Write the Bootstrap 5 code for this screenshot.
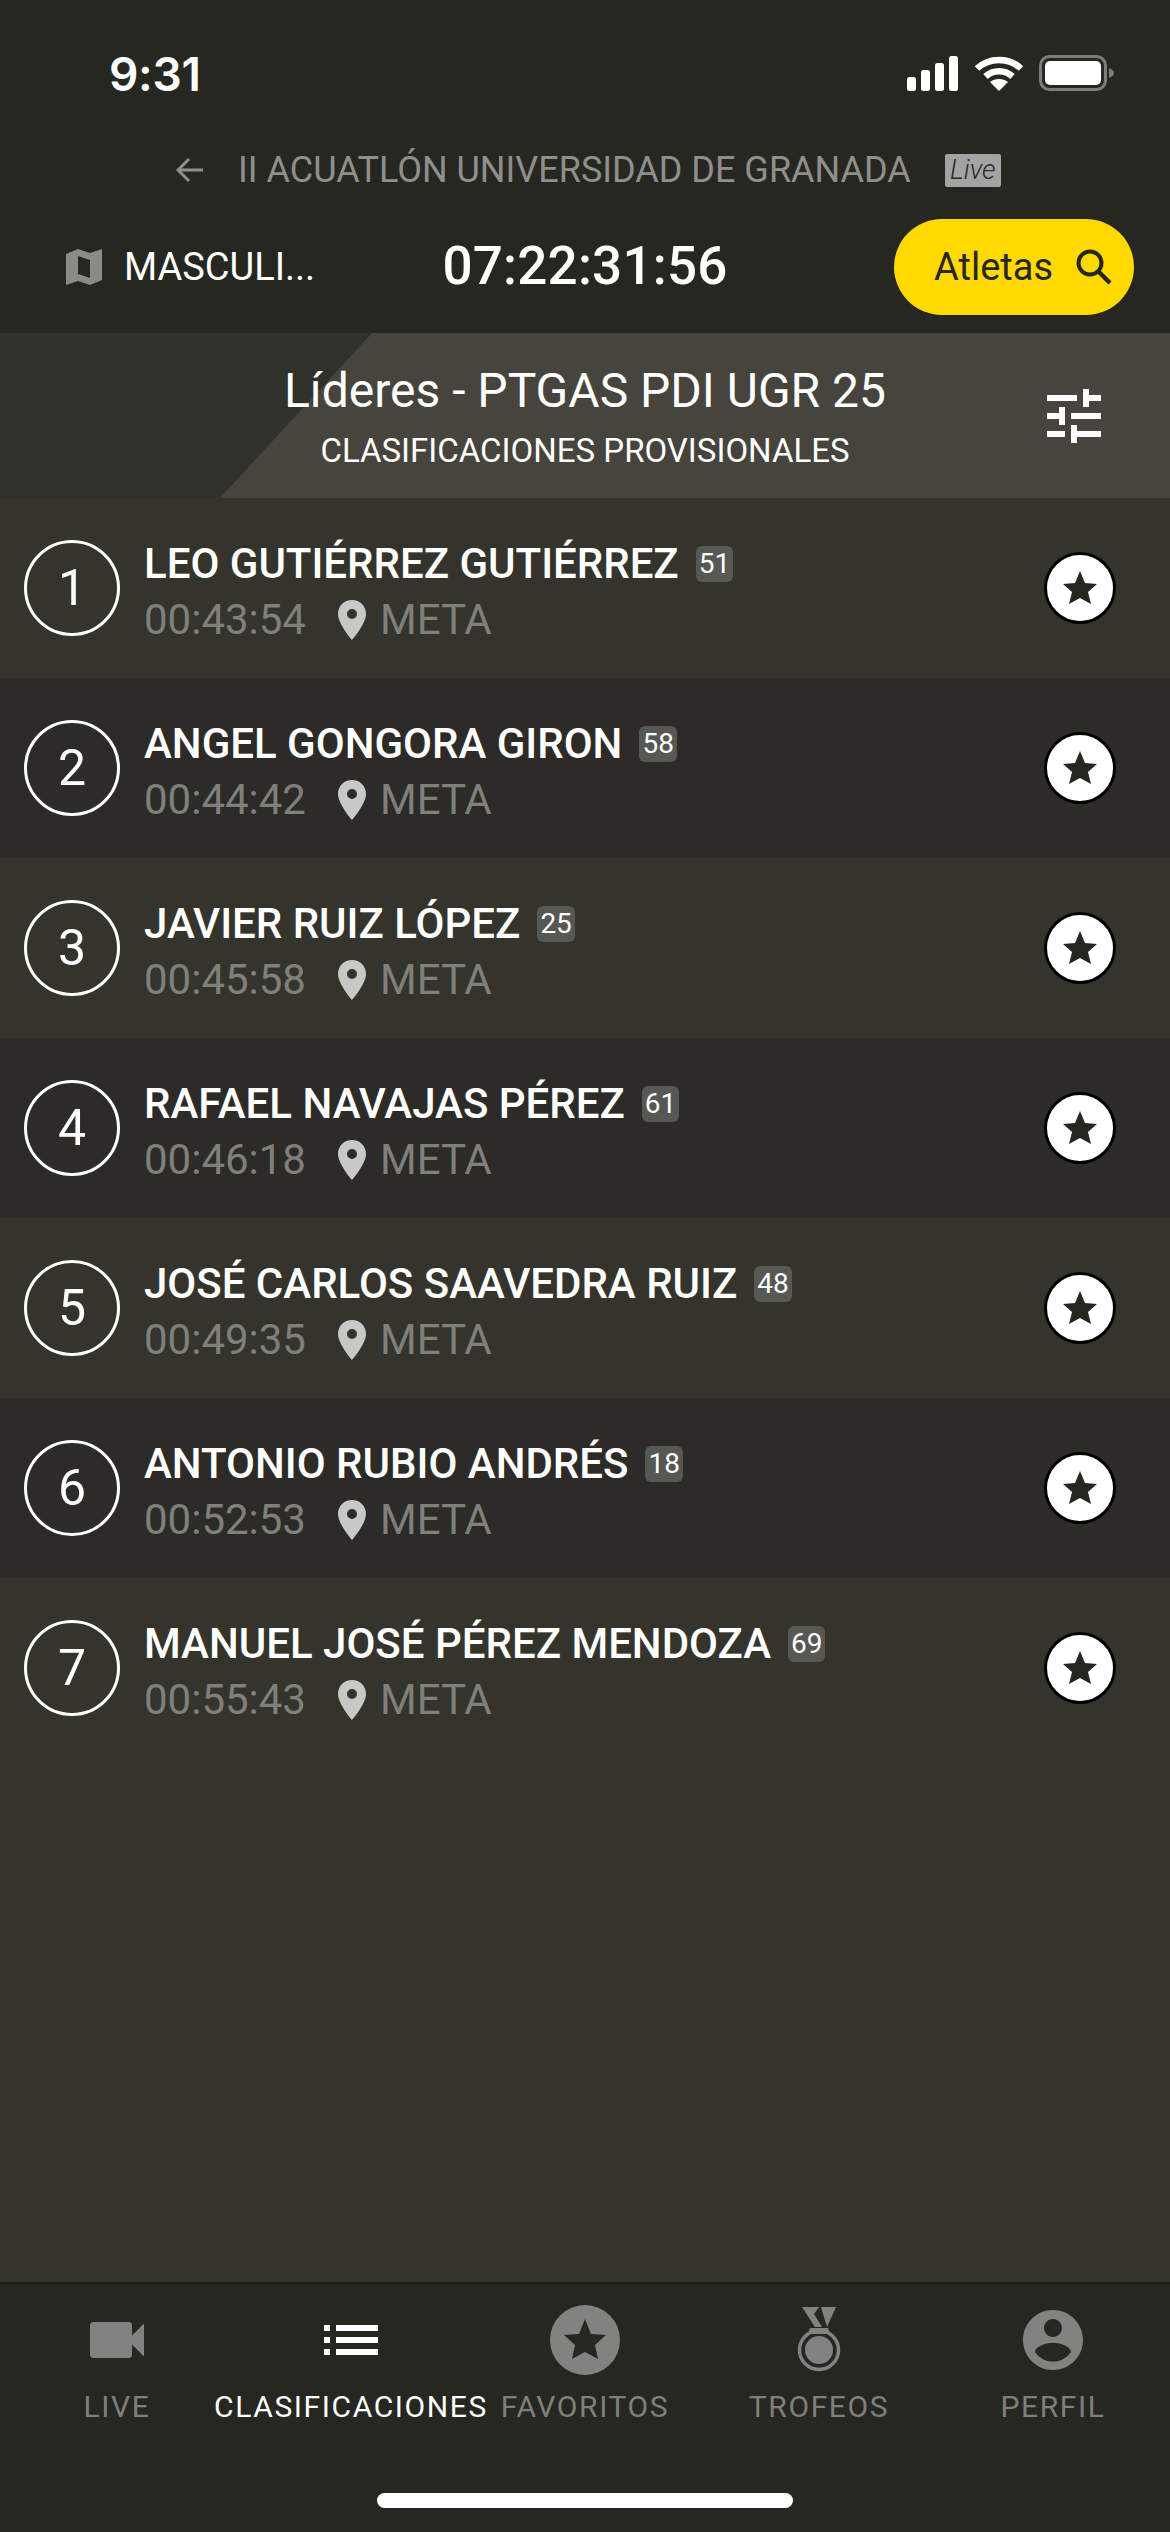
<!DOCTYPE html>
<html lang="es">
<head>
<meta charset="utf-8">
<title>Clasificaciones</title>
<link rel="stylesheet" href="https://cdn.jsdelivr.net/npm/bootstrap@5.3.0/dist/css/bootstrap.min.css">
<style>
html,body{margin:0;height:2532px;background:#34342d;font-family:Roboto,"Liberation Sans",sans-serif;}
.app-shell{width:1170px;height:2532px;overflow:hidden;}
.top-head{background:#272722;height:333px;flex:none;}
.status-bar{height:132px;padding:52px 55px 0 109px;align-items:flex-start;}
.clock{font-family:Inter,Roboto,sans-serif;font-weight:600;font-size:46px;line-height:44px;color:#fff;letter-spacing:-.3px;}
.status-icons{gap:15px;margin-top:3px;}
.event-row{height:76px;padding-left:176px;}
.event-title{font-size:36px;color:#8f8f8b;margin-left:35px;line-height:76px;white-space:nowrap;}
.live-tag{width:56px;height:33px;background:#a3a3a3;color:#2a2a26;font-style:italic;font-weight:300;font-size:27px;line-height:33px;text-align:center;border-radius:2px;margin-left:34px;}
.race-row{height:96px;margin-top:11px;padding-left:66px;padding-right:36px;}
.cat-name{font-size:38px;color:#fff;margin-left:22px;width:200px;}
.race-clock{font-size:53px;font-weight:500;color:#fff;width:300px;text-align:center;margin-left:111px;letter-spacing:.2px;}
.btn.athletes-btn{height:96px;width:240px;border-radius:48px;background:#ffd900;border:0;color:#272722;font-size:38px;padding:0 0 0 18px;gap:23px;margin-left:auto;}
.stage-band{height:165px;flex:none;background:#31312c;position:relative;color:#fff;}
.stage-band::before{content:"";position:absolute;inset:0;background:#46443d;clip-path:polygon(372px 0,100% 0,100% 100%,220px 100%);}
.stage-text{position:relative;text-align:center;width:100%;}
.stage-title{font-size:48px;line-height:54px;margin:0;padding-top:31px;font-weight:400;}
.stage-sub{font-size:33px;line-height:40px;margin-top:13px;font-weight:400;}
.tune-icon{position:absolute;left:1038px;top:47px;}
.rank-list{flex:1 1 auto;background:#34342d;}
.rank-list .list-group-item{height:180px;flex:none;background:#34342d;border:0;padding:0 0 0 24px;color:#fff;}
.rank-list .list-group-item:nth-child(even){background:#2c2b27;}
.pos-ring{width:96px;height:96px;border:3px solid #fff;border-radius:50%;font-size:50px;font-weight:400;flex:none;}
.rank-body{margin-left:24px;flex:1 1 auto;margin-top:8px;}
.athlete-name{font-size:42px;font-weight:500;line-height:48px;color:#fff;white-space:nowrap;}
.bib-tag{display:inline-block;background:#575753;color:#fff;border-radius:6px;font-size:28px;line-height:36px;font-weight:400;padding:0 3px;margin-left:17px;vertical-align:5px;}
.split-line{font-size:42px;line-height:48px;color:#7f7f7b;margin-top:8px;}
.pin-svg{margin:0 14px 0 32px;}
.fav-btn{width:72px;height:72px;border:3px solid #000;background:#fff;border-radius:50%;margin-right:54px;flex:none;}
.tab-bar{height:250px;flex:none;background:#272722;border-top:2px solid #1d1d19;flex-wrap:nowrap;}
.tab-bar .nav-link{flex:1 1 0;min-width:0;padding:20px 0 0;color:#7f7f7b;font-size:30px;line-height:34px;letter-spacing:1.6px;white-space:nowrap;}
.tab-bar .nav-link.active-tab{color:#fff;}
.tab-bar svg{display:block;margin-bottom:14px;flex:none;}
.home-pill{width:416px;height:15px;background:#fff;border-radius:8px;position:absolute;left:377px;top:2493px;}
</style>
</head>
<body>
<div class="app-shell d-flex flex-column">
  <header class="top-head">
    <div class="status-bar d-flex justify-content-between">
      <span class="clock">9:31</span>
      <span class="status-icons d-flex">
        <svg width="52" height="36" viewBox="0 0 52 36"><g fill="#fff"><rect x="0" y="22" width="9" height="14" rx="2.5"/><rect x="14" y="15" width="9" height="21" rx="2.5"/><rect x="28" y="8" width="9" height="28" rx="2.5"/><rect x="42" y="1" width="9" height="35" rx="2.5"/></g></svg>
        <svg width="50" height="36" viewBox="0 0 50 36"><g fill="none" stroke="#fff" stroke-width="6.5"><path d="M3 13.5C15 2 35 2 47 13.5"/><path d="M11.500 21.500C19 14.500 31 14.500 38.500 21.500"/></g><path d="M25 36L16 27C21 23 29 23 34 27Z" fill="#fff"/></svg>
        <svg width="76" height="36" viewBox="0 0 76 36"><rect x="1.500" y="1.500" width="65" height="33" rx="9" fill="none" stroke="#7c7c79" stroke-width="3"/><rect x="6" y="6" width="56" height="24" rx="5" fill="#fff"/><path d="M70 13C73 14 75 16 75 18S73 22 70 23Z" fill="#7c7c79"/></svg>
      </span>
    </div>
    <div class="event-row d-flex align-items-center">
      <svg width="27" height="26" viewBox="0 0 27 26"><path d="M13 2L2 13L13 24M2 13H27" fill="none" stroke="#8f8f8b" stroke-width="3"/></svg>
      <span class="event-title">II ACUATLÓN UNIVERSIDAD DE GRANADA</span>
      <span class="live-tag">Live</span>
    </div>
    <div class="race-row d-flex align-items-center">
      <svg width="36" height="36" viewBox="0 0 36 36"><path fill="#8b8b87" fill-rule="evenodd" d="M0 5L12 0L24 4L36 0V31L24 36L12 32L0 36ZM12 7V25L24 29V11Z"/></svg>
      <span class="cat-name text-truncate">MASCULI...</span>
      <span class="race-clock">07:22:31:56</span>
      <button type="button" class="btn athletes-btn d-flex align-items-center justify-content-center">Atletas
        <svg width="36" height="36" viewBox="0 0 36 36"><circle cx="14" cy="14" r="11.500" fill="none" stroke="#272722" stroke-width="4"/><path d="M22 22L34 34" stroke="#272722" stroke-width="4.500"/></svg>
      </button>
    </div>
  </header>

  <section class="stage-band">
    <div class="stage-text">
      <h1 class="stage-title">Líderes - PTGAS PDI UGR 25</h1>
      <div class="stage-sub">CLASIFICACIONES PROVISIONALES</div>
    </div>
    <svg class="tune-icon" width="72" height="72" viewBox="0 0 24 24"><path fill="#fff" d="M3 17v2h6v-2H3zM3 5v2h10V5H3zm10 16v-2h8v-2h-8v-2h-2v6h2zM7 9v2H3v2h4v2h2V9H7zm14 4v-2H11v2h10zm-6-4h2V7h4V5h-4V3h-2v6z"/></svg>
  </section>

  <main class="rank-list list-group list-group-flush rounded-0">
    <div class="list-group-item d-flex align-items-center"><span class="pos-ring d-flex align-items-center justify-content-center">1</span><div class="rank-body"><div class="athlete-name">LEO GUTIÉRREZ GUTIÉRREZ<span class="bib-tag">51</span></div><div class="split-line d-flex align-items-center">00:43:54<svg class="pin-svg" width="28" height="40" viewBox="0 0 28 40"><path fill="#c8c8c8" fill-rule="evenodd" d="M14 0C6 0 0 6 0 14C0 24 14 40 14 40S28 24 28 14C28 6 22 0 14 0ZM14 9A5 5 0 1 1 14 19A5 5 0 1 1 14 9Z"/></svg>META</div></div><span class="fav-btn d-flex align-items-center justify-content-center"><svg width="34" height="34" viewBox="0 0 34 34"><path fill="#272722" d="M17 0L22 12L34 13L25 21L28 33L17 27L6 33L9 21L0 13L12 12Z"/></svg></span></div>
    <div class="list-group-item d-flex align-items-center"><span class="pos-ring d-flex align-items-center justify-content-center">2</span><div class="rank-body"><div class="athlete-name">ANGEL GONGORA GIRON<span class="bib-tag">58</span></div><div class="split-line d-flex align-items-center">00:44:42<svg class="pin-svg" width="28" height="40" viewBox="0 0 28 40"><path fill="#c8c8c8" fill-rule="evenodd" d="M14 0C6 0 0 6 0 14C0 24 14 40 14 40S28 24 28 14C28 6 22 0 14 0ZM14 9A5 5 0 1 1 14 19A5 5 0 1 1 14 9Z"/></svg>META</div></div><span class="fav-btn d-flex align-items-center justify-content-center"><svg width="34" height="34" viewBox="0 0 34 34"><path fill="#272722" d="M17 0L22 12L34 13L25 21L28 33L17 27L6 33L9 21L0 13L12 12Z"/></svg></span></div>
    <div class="list-group-item d-flex align-items-center"><span class="pos-ring d-flex align-items-center justify-content-center">3</span><div class="rank-body"><div class="athlete-name">JAVIER RUIZ LÓPEZ<span class="bib-tag">25</span></div><div class="split-line d-flex align-items-center">00:45:58<svg class="pin-svg" width="28" height="40" viewBox="0 0 28 40"><path fill="#c8c8c8" fill-rule="evenodd" d="M14 0C6 0 0 6 0 14C0 24 14 40 14 40S28 24 28 14C28 6 22 0 14 0ZM14 9A5 5 0 1 1 14 19A5 5 0 1 1 14 9Z"/></svg>META</div></div><span class="fav-btn d-flex align-items-center justify-content-center"><svg width="34" height="34" viewBox="0 0 34 34"><path fill="#272722" d="M17 0L22 12L34 13L25 21L28 33L17 27L6 33L9 21L0 13L12 12Z"/></svg></span></div>
    <div class="list-group-item d-flex align-items-center"><span class="pos-ring d-flex align-items-center justify-content-center">4</span><div class="rank-body"><div class="athlete-name">RAFAEL NAVAJAS PÉREZ<span class="bib-tag">61</span></div><div class="split-line d-flex align-items-center">00:46:18<svg class="pin-svg" width="28" height="40" viewBox="0 0 28 40"><path fill="#c8c8c8" fill-rule="evenodd" d="M14 0C6 0 0 6 0 14C0 24 14 40 14 40S28 24 28 14C28 6 22 0 14 0ZM14 9A5 5 0 1 1 14 19A5 5 0 1 1 14 9Z"/></svg>META</div></div><span class="fav-btn d-flex align-items-center justify-content-center"><svg width="34" height="34" viewBox="0 0 34 34"><path fill="#272722" d="M17 0L22 12L34 13L25 21L28 33L17 27L6 33L9 21L0 13L12 12Z"/></svg></span></div>
    <div class="list-group-item d-flex align-items-center"><span class="pos-ring d-flex align-items-center justify-content-center">5</span><div class="rank-body"><div class="athlete-name">JOSÉ CARLOS SAAVEDRA RUIZ<span class="bib-tag">48</span></div><div class="split-line d-flex align-items-center">00:49:35<svg class="pin-svg" width="28" height="40" viewBox="0 0 28 40"><path fill="#c8c8c8" fill-rule="evenodd" d="M14 0C6 0 0 6 0 14C0 24 14 40 14 40S28 24 28 14C28 6 22 0 14 0ZM14 9A5 5 0 1 1 14 19A5 5 0 1 1 14 9Z"/></svg>META</div></div><span class="fav-btn d-flex align-items-center justify-content-center"><svg width="34" height="34" viewBox="0 0 34 34"><path fill="#272722" d="M17 0L22 12L34 13L25 21L28 33L17 27L6 33L9 21L0 13L12 12Z"/></svg></span></div>
    <div class="list-group-item d-flex align-items-center"><span class="pos-ring d-flex align-items-center justify-content-center">6</span><div class="rank-body"><div class="athlete-name">ANTONIO RUBIO ANDRÉS<span class="bib-tag">18</span></div><div class="split-line d-flex align-items-center">00:52:53<svg class="pin-svg" width="28" height="40" viewBox="0 0 28 40"><path fill="#c8c8c8" fill-rule="evenodd" d="M14 0C6 0 0 6 0 14C0 24 14 40 14 40S28 24 28 14C28 6 22 0 14 0ZM14 9A5 5 0 1 1 14 19A5 5 0 1 1 14 9Z"/></svg>META</div></div><span class="fav-btn d-flex align-items-center justify-content-center"><svg width="34" height="34" viewBox="0 0 34 34"><path fill="#272722" d="M17 0L22 12L34 13L25 21L28 33L17 27L6 33L9 21L0 13L12 12Z"/></svg></span></div>
    <div class="list-group-item d-flex align-items-center"><span class="pos-ring d-flex align-items-center justify-content-center">7</span><div class="rank-body"><div class="athlete-name">MANUEL JOSÉ PÉREZ MENDOZA<span class="bib-tag">69</span></div><div class="split-line d-flex align-items-center">00:55:43<svg class="pin-svg" width="28" height="40" viewBox="0 0 28 40"><path fill="#c8c8c8" fill-rule="evenodd" d="M14 0C6 0 0 6 0 14C0 24 14 40 14 40S28 24 28 14C28 6 22 0 14 0ZM14 9A5 5 0 1 1 14 19A5 5 0 1 1 14 9Z"/></svg>META</div></div><span class="fav-btn d-flex align-items-center justify-content-center"><svg width="34" height="34" viewBox="0 0 34 34"><path fill="#272722" d="M17 0L22 12L34 13L25 21L28 33L17 27L6 33L9 21L0 13L12 12Z"/></svg></span></div>
  </main>

  <nav class="tab-bar nav">
    <a class="nav-link d-flex flex-column align-items-center" href="#"><svg width="72" height="72" viewBox="0 0 24 24"><path fill="#828280" d="M17 10.500V7c0-.55-.45-1-1-1H4c-.55 0-1 .45-1 1v10c0 .55.45 1 1 1h12c.55 0 1-.45 1-1v-3.500l4 4v-11l-4 4z"/></svg>LIVE</a>
    <a class="nav-link active-tab d-flex flex-column align-items-center" href="#"><svg width="72" height="72" viewBox="0 0 24 24"><path fill="#fff" d="M3 13h2v-2H3v2zm0 4h2v-2H3v2zm0-8h2V7H3v2zm4 4h14v-2H7v2zm0 4h14v-2H7v2zM7 7v2h14V7H7z"/></svg>CLASIFICACIONES</a>
    <a class="nav-link d-flex flex-column align-items-center" href="#"><svg width="72" height="72" viewBox="0 0 72 72"><circle cx="36" cy="36" r="35" fill="#828280"/><path fill="#272722" d="M36 15L42 30L57 31L46 41L49 55L36 48L23 55L26 41L15 31L30 30Z"/></svg>FAVORITOS</a>
    <a class="nav-link d-flex flex-column align-items-center" href="#"><svg width="72" height="72" viewBox="0 0 72 72"><path fill="#828280" d="M19 3H36L31 10L39 23H32ZM38 3H53L44 23Z"/><path fill="#828280" d="M27 24H45L47 30H25Z"/><circle cx="36" cy="46" r="19.500" fill="none" stroke="#828280" stroke-width="3.500"/><circle cx="36" cy="46" r="14" fill="#828280"/></svg>TROFEOS</a>
    <a class="nav-link d-flex flex-column align-items-center" href="#"><svg width="72" height="72" viewBox="0 0 24 24"><path fill="#828280" d="M12 2C6.480 2 2 6.480 2 12s4.480 10 10 10 10-4.480 10-10S17.520 2 12 2zm0 3c1.660 0 3 1.340 3 3s-1.340 3-3 3-3-1.340-3-3 1.340-3 3-3zm0 14.200c-2.500 0-4.710-1.280-6-3.220.030-1.990 4-3.080 6-3.080 1.990 0 5.970 1.090 6 3.080-1.290 1.940-3.500 3.220-6 3.220z"/></svg>PERFIL</a>
  </nav>
  <div class="home-pill"></div>
</div>
<script src="https://cdn.jsdelivr.net/npm/bootstrap@5.3.0/dist/js/bootstrap.bundle.min.js"></script>
</body>
</html>
